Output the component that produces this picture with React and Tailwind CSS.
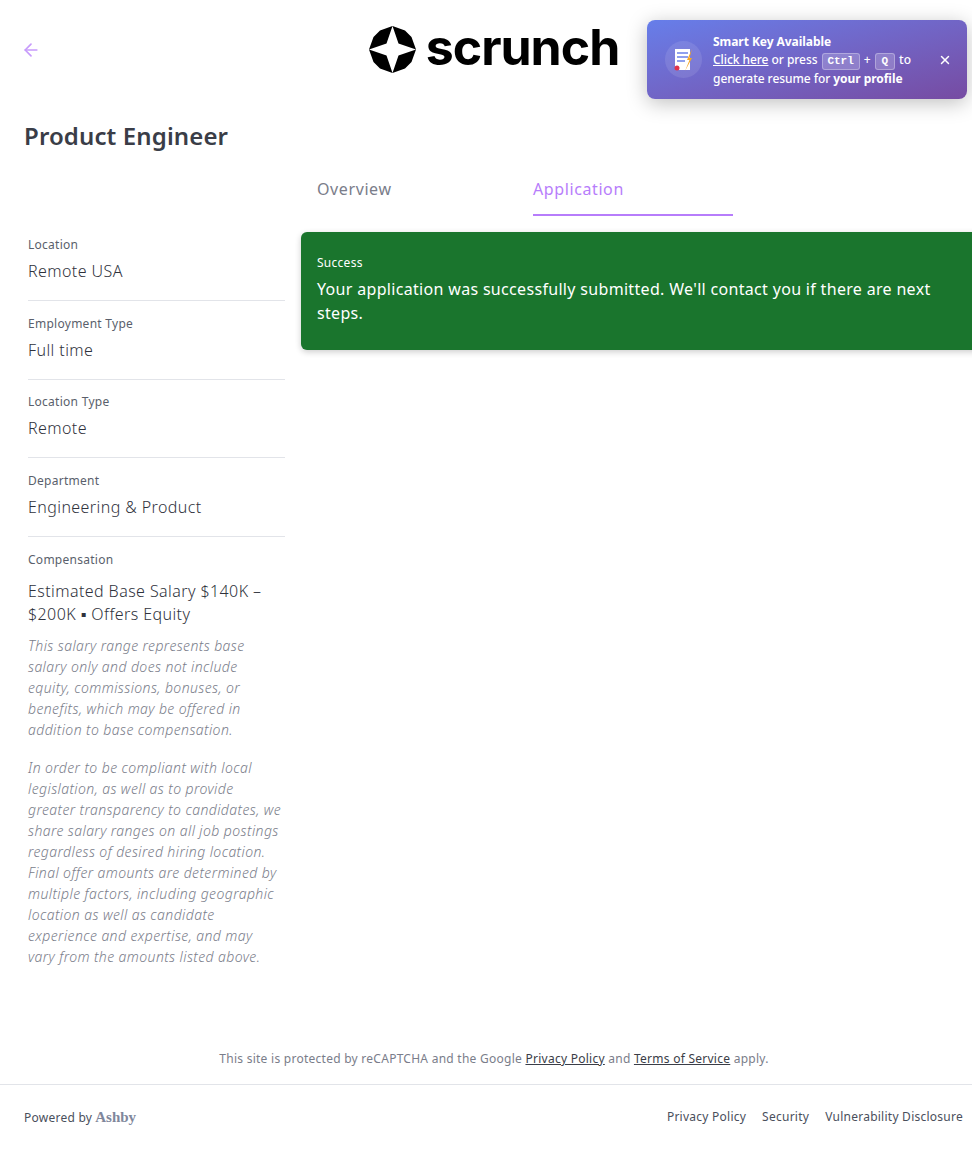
import { ArrowLeft, X } from "lucide-react";

const font = { fontFamily: '"Noto Sans", sans-serif' };

const Field = ({ label, value }) => (
  <div className="mb-[12.67px] border-b border-[#e2e4e9] pb-[17px]">
    <div className="text-[12px] leading-[20px] tracking-[0.27px] text-[#5a5f6c]">{label}</div>
    <div className="mt-[4px] text-[16px] leading-[24px] font-light tracking-[0.42px] text-[#2f323c]">{value}</div>
  </div>
);

const Kbd = ({ children, className = "px-[5px]" }) => (
  <span className={`mx-[4px] inline-block rounded-[3px] border border-white/30 bg-white/20 font-['Liberation_Mono',monospace] text-[11px] leading-[15px] font-bold ${className}`}>
    {children}
  </span>
);

const Toast = () => (
  <div className="absolute top-[20px] right-[5px] flex h-[79px] w-[320px] items-center rounded-[8px] bg-gradient-to-br from-[#667eea] to-[#764ba2] pl-[18px] pr-[15px] text-[12px] leading-[18.5px] tracking-[-0.05px] text-white shadow-[0_4px_20px_rgba(0,0,0,0.25)]">
    <div className="flex h-[37px] w-[37px] shrink-0 items-center justify-center rounded-full bg-white/10">
      <svg width="26" height="28" viewBox="0 0 26 28">
        <rect x="4" y="3" width="15" height="21" fill="#fff" />
        <rect x="6" y="6" width="11" height="2" fill="#8fa0ee" />
        <rect x="6" y="10" width="11" height="2" fill="#8fa0ee" />
        <rect x="6" y="14" width="8" height="2" fill="#8fa0ee" />
        <circle cx="6" cy="22" r="2.5" fill="#e0324b" />
        <path d="M21 3 L16 14 L18.5 14 L14 25 L21 12 L18.5 12 Z" fill="#f5a623" />
      </svg>
    </div>
    <div className="ml-[11px] flex-1 pt-[2px] font-medium">
      <div className="font-bold">Smart Key Available</div>
      <div>
        <span className="underline">Click here</span> or press<Kbd>Ctrl</Kbd>+<Kbd className="px-[6px]">Q</Kbd>to
      </div>
      <div>
        generate resume for <span className="font-bold">your profile</span>
      </div>
    </div>
    <X size={14} strokeWidth={2.5} className="shrink-0" />
  </div>
);

const Logo = () => (
  <div className="flex items-center">
    <svg width="47" height="47" viewBox="0 0 47 47">
      <path
        fillRule="evenodd"
        fill="#000"
        d="M23.5 0 L36 4.5 L42.5 11 L47 23.5 L42.5 36 L36 42.5 L23.5 47 L11 42.5 L4.5 36 L0 23.5 L4.5 11 L11 4.5 Z M23.5 0 L29.5 17.5 L47 23.5 L29.5 29.5 L23.5 47 L17.5 29.5 L0 23.5 L17.5 17.5 Z"
      />
    </svg>
    <span className="ml-[10px] -mt-[3px] font-['Inter',sans-serif] text-[50px] leading-[47px] font-bold tracking-[-1px] text-black">
      scrunch
    </span>
  </div>
);

export default function App() {
  return (
    <div style={font} className="relative h-[1172px] w-[972px] overflow-hidden bg-white text-[#3a3d47]">
      <Toast />

      <header className="relative flex h-[100px] items-center justify-center">
        <ArrowLeft size={20} className="absolute left-[21px] top-[40px] text-[#c79bfb]" />
        <div className="ml-[16px] -mt-[2px]">
          <Logo />
        </div>
      </header>

      <h1 className="ml-[24px] mt-[18px] text-[24px] leading-[36px] font-semibold tracking-[0.12px] text-[#3a3d47]">
        Product Engineer
      </h1>

      <div className="ml-[317px] mt-[23px] flex h-[39px] text-[16px] tracking-[0.6px]">
        <div className="w-[216px] text-[#7a7d8a]">Overview</div>
        <div className="h-[39px] w-[200px] border-b-2 border-[#b77dfb] text-[#b77dfb]">Application</div>
      </div>

      <div className="mt-[16px] flex">
        <aside className="ml-[28px] w-[257px] shrink-0 pt-[3px]">
          <Field label="Location" value="Remote USA" />
          <Field label="Employment Type" value="Full time" />
          <Field label="Location Type" value="Remote" />
          <Field label="Department" value="Engineering & Product" />
          <div className="text-[12px] leading-[20px] tracking-[0.27px] text-[#5a5f6c]">Compensation</div>
          <div className="mt-[10.5px] text-[16px] leading-[23px] font-light tracking-[0.42px] text-[#2f323c]">
            Estimated Base Salary $140K – $200K ▪ Offers Equity
          </div>
          <div className="mt-[9px] whitespace-nowrap text-[14px] leading-[21px] font-light tracking-[0.41px] text-[#7a7d8a] italic">
            <p>
              This salary range represents base
              <br />
              salary only and does not include
              <br />
              equity, commissions, bonuses, or
              <br />
              benefits, which may be offered in
              <br />
              addition to base compensation.
            </p>
            <p className="mt-[17px]">
              In order to be compliant with local
              <br />
              legislation, as well as to provide
              <br />
              greater transparency to candidates, we
              <br />
              share salary ranges on all job postings
              <br />
              regardless of desired hiring location.
              <br />
              Final offer amounts are determined by
              <br />
              multiple factors, including geographic
              <br />
              location as well as candidate
              <br />
              experience and expertise, and may
              <br />
              vary from the amounts listed above.
            </p>
          </div>
        </aside>
        <main className="ml-[16px] min-w-0 flex-1">
          <div className="h-[118px] w-[680px] rounded-[6px] bg-[#1a752d] pl-[16px] pr-[32px] pt-[21px] text-white shadow-[0_2px_6px_rgba(0,0,0,0.2)]">
            <div className="text-[12px] leading-[20px] tracking-[0.27px]">Success</div>
            <div className="mt-[4px] text-[16px] leading-[24px] tracking-[0.32px]">
              Your application was successfully submitted. We'll contact you if there are next steps.
            </div>
          </div>
        </main>
      </div>

      <p className="mt-[83px] pl-[16px] text-center text-[12px] leading-[18px] tracking-[0.26px] text-[#7a7d8a]">
        This site is protected by reCAPTCHA and the Google <span className="text-[#3a3d47] underline">Privacy Policy</span> and{" "}
        <span className="text-[#3a3d47] underline">Terms of Service</span> apply.
      </p>

      <footer className="mt-[16px] flex h-[66px] items-center justify-between border-t border-[#e2e4e9] pl-[24px] pr-[9px] text-[12px] tracking-[0.25px] text-[#4a4f5c]">
        <div className="flex items-center">
          Powered by
          <span className="ml-[3px] font-['Liberation_Serif',serif] text-[15px] font-bold tracking-normal text-[#7f879c]">Ashby</span>
        </div>
        <div className="-mt-[2px] flex gap-[16px]">
          <span>Privacy Policy</span>
          <span>Security</span>
          <span>Vulnerability Disclosure</span>
        </div>
      </footer>
    </div>
  );
}
